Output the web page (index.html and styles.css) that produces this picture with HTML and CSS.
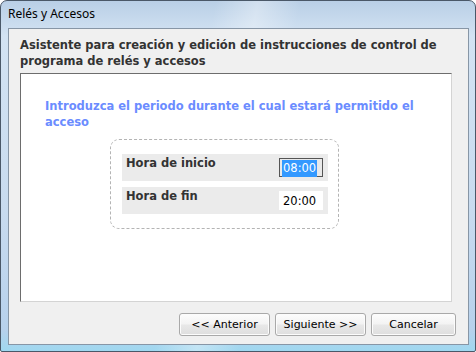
FILE: index.html
```html
<!DOCTYPE html>
<html>
<head>
<meta charset="utf-8">
<link rel="stylesheet" href="styles.css">
</head>
<body>
<div class="window">
  <div class="titlebar">Relés y Accesos</div>
  <div class="client">
    <div class="header">Asistente para creación y edición de instrucciones de control de programa de relés y accesos</div>
    <div class="panel">
      <div class="prompt">Introduzca el periodo durante el cual estará permitido el acceso</div>
      <div class="group">
        <div class="row">
          <span class="label">Hora de inicio</span>
          <span class="field focused"><span class="sel">08:00</span></span>
        </div>
        <div class="row">
          <span class="label">Hora de fin</span>
          <span class="field">20:00</span>
        </div>
      </div>
    </div>
    <div class="buttons">
      <button class="btn wide">&lt;&lt; Anterior</button>
      <button class="btn wide">Siguiente &gt;&gt;</button>
      <button class="btn">Cancelar</button>
    </div>
  </div>
</div>
</body>
</html>
```

FILE: styles.css
```css
* { box-sizing: border-box; }
html, body { margin: 0; padding: 0; background: #fff; }
.window {
  width: 476px;
  height: 352px;
  border: 1px solid #4a5868;
  border-radius: 7px 7px 2px 2px;
  background:
    linear-gradient(100deg, rgba(255,255,255,0) 40%, rgba(255,255,255,0.35) 48%, rgba(255,255,255,0) 56%),
    linear-gradient(to bottom, #b9cfe6 0%, #d3e3f3 10%, #c8dbef 60%, #b7d1ec 94%, #9fd8f0 100%);
  display: flex;
  flex-direction: column;
  padding: 0 6px 6px 7px;
}
.titlebar {
  height: 27px;
  font-family: "Noto Sans", "Open Sans", sans-serif;
  font-size: 12px;
  color: #000;
  line-height: 26px;
  white-space: nowrap;
}
.client {
  flex: 1;
  background: #f0f0f0;
  border: 1px solid #8796a6;
  display: flex;
  flex-direction: column;
}
.header {
  font-family: "DejaVu Sans", Verdana, sans-serif;
  font-weight: bold;
  font-size: 11.5px;
  line-height: 16px;
  color: #333;
  padding: 8px 14px 0 11px;
  height: 44px;
}
.panel {
  margin: 0 16px 0 11px;
  height: 229px;
  background: #fff;
  border-style: solid;
  border-width: 1px;
  border-color: #6d6d6d #d4d4d4 #d4d4d4 #6d6d6d;
  padding: 24px 20px 0 24px;
}
.prompt {
  font-family: "DejaVu Sans", Verdana, sans-serif;
  font-weight: bold;
  font-size: 11.5px;
  line-height: 16px;
  color: #6b8cff;
}
.group {
  margin: 9px 0 0 65px;
  width: 229px;
  border: 1px dashed #b4b4b4;
  border-radius: 9px;
  padding: 14px 10px 14px 11px;
  display: flex;
  flex-direction: column;
  gap: 6px;
}
.row {
  height: 27px;
  background: #ebebeb;
  display: flex;
  justify-content: space-between;
  align-items: flex-start;
  padding: 0 5px 0 4px;
}
.label {
  font-family: "DejaVu Sans", Verdana, sans-serif;
  font-weight: bold;
  font-size: 11.5px;
  color: #333;
  line-height: 16px;
  padding-top: 1px;
}
.field {
  margin-top: 4px;
  width: 44px;
  height: 19px;
  background: #fff;
  font-family: "DejaVu Sans", Tahoma, sans-serif;
  font-size: 11.5px;
  color: #000;
  line-height: 17px;
  padding: 1px 0 0 3px;
  border: 1px solid transparent;
}
.field.focused {
  border-color: #555;
  background: #e9e9e9;
  padding-left: 2px;
}
.sel {
  background: #3399ff;
  color: #fff;
  display: inline-block;
  padding: 0 1px;
}
.buttons {
  display: flex;
  justify-content: flex-end;
  gap: 5px;
  padding: 11px 12px 0 0;
}
.btn {
  height: 23px;
  width: 85px;
  font-family: "DejaVu Sans", Tahoma, sans-serif;
  font-size: 11px;
  color: #000;
  border: 1px solid #a9a9a9;
  border-radius: 3px;
  background: linear-gradient(to bottom, #fdfdfd 0%, #f3f3f3 48%, #e8e8e8 52%, #dedede 100%);
  box-shadow: inset 0 0 0 1px #fcfcfc;
  padding: 0;
}
.btn.wide { width: 91px; }
```
